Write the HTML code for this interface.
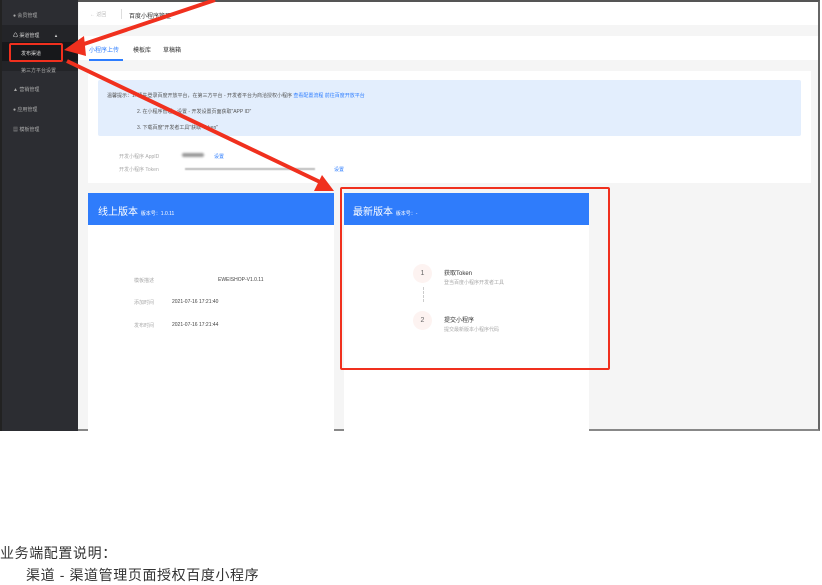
<!DOCTYPE html>
<html><head><meta charset="utf-8"><style>
*{margin:0;padding:0;box-sizing:border-box}
body{width:822px;height:583px;background:#fff;position:relative;overflow:hidden;font-family:"Liberation Sans","Noto Sans CJK SC",sans-serif}
.a{position:absolute}
.s{font-size:5px;white-space:nowrap}
</style></head><body>
<div class="a" style="left:0;top:0;width:820px;height:431px;background:#f5f5f5;border-right:2px solid #666;border-bottom:2px solid #888;border-top:2px solid #555"></div>
<div class="a" style="left:0;top:0;width:78px;height:431px;background:#2c2d32;border-left:2px solid #222"></div>
<div class="a" style="left:2px;top:25px;width:76px;height:46px;background:#232428"></div>
<div class="a" style="left:2px;top:42px;width:76px;height:19px;background:#17181b"></div>
<div class="a s" style="left:13px;top:12px;color:#aaa">● 会员管理</div>
<div class="a s" style="left:13px;top:32px;color:#ccc">♺ 渠道管理 <span style="margin-left:14px">▴</span></div>
<div class="a s" style="left:21px;top:50px;color:#ddd">发布渠道</div>
<div class="a s" style="left:21px;top:67px;color:#aaa">第三方平台设置</div>
<div class="a s" style="left:13px;top:86px;color:#aaa">▲ 营销管理</div>
<div class="a s" style="left:13px;top:106px;color:#aaa">● 应用管理</div>
<div class="a s" style="left:13px;top:126px;color:#aaa">▦ 模板管理</div>
<div class="a" style="left:79px;top:2px;width:739px;height:23px;background:#fff"></div>
<div class="a s" style="left:90px;top:11px;color:#bbb">← 返回</div>
<div class="a" style="left:121px;top:9px;width:1px;height:10px;background:#ddd"></div>
<div class="a s" style="left:129px;top:11px;color:#333;font-size:6px">百度小程序管理</div>
<div class="a" style="left:79px;top:36px;width:739px;height:24px;background:#fff"></div>
<div class="a s" style="left:89px;top:45px;color:#2d7dff;font-size:6px">小程序上传</div>
<div class="a" style="left:89px;top:59px;width:34px;height:2px;background:#2d7dff"></div>
<div class="a s" style="left:133px;top:45px;color:#333;font-size:6px">模板库</div>
<div class="a s" style="left:163px;top:45px;color:#333;font-size:6px">草稿箱</div>
<div class="a" style="left:88px;top:71px;width:723px;height:112px;background:#fff"></div>
<div class="a" style="left:98px;top:80px;width:703px;height:56px;background:#e3eefd;border-radius:2px"></div>
<div class="a s" style="left:107px;top:92px;color:#555">温馨提示：1. 请先登录百度开放平台，在第三方平台 - 开发者平台为商洽授权小程序 <span style="color:#2d7dff">查看配置流程 前往百度开放平台</span></div>
<div class="a s" style="left:137px;top:108px;color:#555">2. 在小程序管理 - 设置 - 开发设置页面获取"APP ID"</div>
<div class="a s" style="left:137px;top:124px;color:#555">3. 下载百度"开发者工具"获取"Token"</div>
<div class="a s" style="left:119px;top:153px;color:#aaa">开发小程序 AppID</div>
<div class="a" style="left:182px;top:153px;width:22px;height:4px;background:#999;border-radius:2px;filter:blur(1px)"></div>
<div class="a s" style="left:214px;top:153px;color:#2d7dff">设置</div>
<div class="a s" style="left:119px;top:166px;color:#aaa">开发小程序 Token</div>
<div class="a" style="left:185px;top:168px;width:130px;height:2px;background:#bbb;filter:blur(0.6px)"></div>
<div class="a s" style="left:334px;top:166px;color:#2d7dff">设置</div>
<div class="a" style="left:88px;top:193px;width:246px;height:238px;background:#fff"></div>
<div class="a" style="left:88px;top:193px;width:246px;height:32px;background:#2f7cfb"></div>
<div class="a" style="left:98px;top:203px;color:#fff;font-size:10px;white-space:nowrap">线上版本 <span style="font-size:5px">版本号：1.0.11</span></div>
<div class="a s" style="left:134px;top:277px;color:#aaa">模板描述</div>
<div class="a s" style="left:218px;top:277px;color:#444">EWEISHOP-V1.0.11</div>
<div class="a s" style="left:134px;top:299px;color:#aaa">添加时间</div>
<div class="a s" style="left:172px;top:299px;color:#444">2021-07-16 17:21:40</div>
<div class="a s" style="left:134px;top:322px;color:#aaa">发布时间</div>
<div class="a s" style="left:172px;top:322px;color:#444">2021-07-16 17:21:44</div>
<div class="a" style="left:344px;top:193px;width:245px;height:238px;background:#fff"></div>
<div class="a" style="left:344px;top:193px;width:245px;height:32px;background:#2f7cfb"></div>
<div class="a" style="left:353px;top:203px;color:#fff;font-size:10px;white-space:nowrap">最新版本 <span style="font-size:5px">版本号：-</span></div>
<div class="a" style="left:413px;top:264px;width:19px;height:19px;border-radius:50%;background:#fdf3f1;color:#666;font-size:7px;text-align:center;line-height:19px">1</div>
<div class="a" style="left:423px;top:287px;height:15px;border-left:1px dashed #ccc"></div>
<div class="a" style="left:413px;top:311px;width:19px;height:19px;border-radius:50%;background:#fdf3f1;color:#666;font-size:7px;text-align:center;line-height:19px">2</div>
<div class="a s" style="left:444px;top:268px;color:#333;font-size:6px">获取Token</div>
<div class="a s" style="left:444px;top:279px;color:#aaa">登当百度小程序开发者工具</div>
<div class="a s" style="left:444px;top:315px;color:#333;font-size:6px">提交小程序</div>
<div class="a s" style="left:444px;top:326px;color:#aaa">提交最新版本小程序代码</div>
<div class="a" style="left:340px;top:187px;width:270px;height:183px;border:2px solid #f0301e;border-radius:2px"></div>
<div class="a" style="left:9px;top:43px;width:54px;height:19px;border:2px solid #f0301e;border-radius:2px"></div>
<svg class="a" style="left:0;top:0" width="822" height="431">
<line x1="215" y1="0" x2="78" y2="46" stroke="#f0301e" stroke-width="4"/>
<polygon points="64,50 84,36 86,56" fill="#f0301e"/>
<line x1="67" y1="61" x2="320" y2="182" stroke="#f0301e" stroke-width="4"/>
<polygon points="334,191 314,191 322,175" fill="#f0301e"/>
</svg>
<div class="a" style="left:0;top:543px;font-size:14px;letter-spacing:0.6px;color:#333;white-space:nowrap">业务端配置说明：</div>
<div class="a" style="left:26px;top:565px;font-size:14px;letter-spacing:0.6px;color:#333;white-space:nowrap">渠道 - 渠道管理页面授权百度小程序</div>
</body></html>
